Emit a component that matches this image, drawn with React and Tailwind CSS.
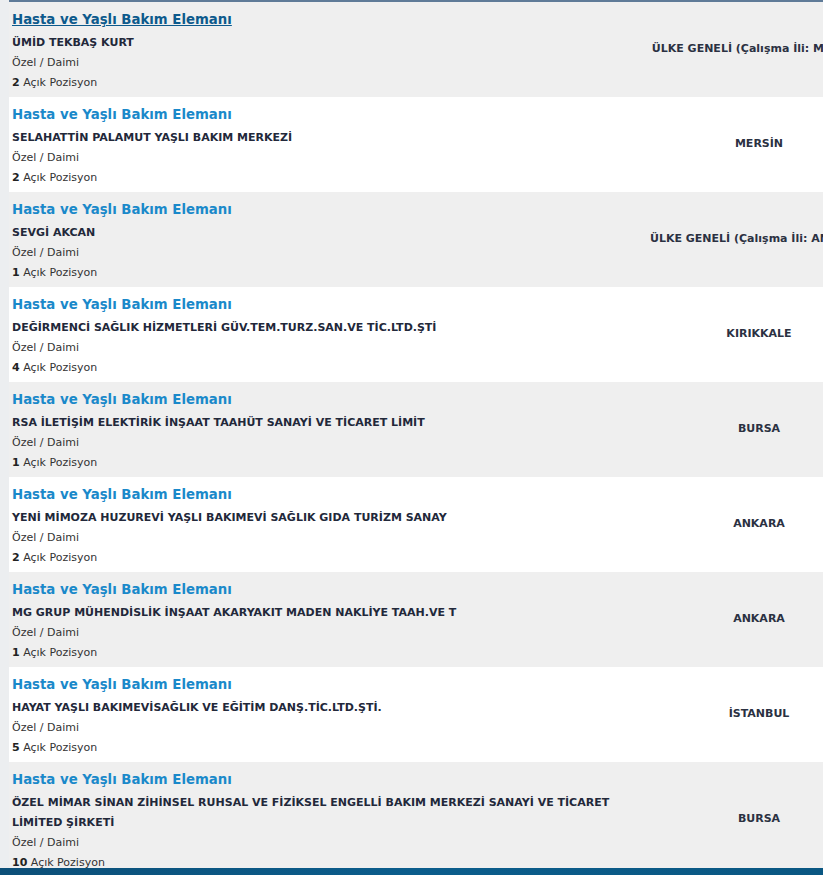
import React from 'react';

const jobs = [
  { company: 'ÜMİD TEKBAŞ KURT', count: 2, city: 'ÜLKE GENELİ (Çalışma İli: MERSİN)', hover: true },
  { company: 'SELAHATTİN PALAMUT YAŞLI BAKIM MERKEZİ', count: 2, city: 'MERSİN' },
  { company: 'SEVGİ AKCAN', count: 1, city: 'ÜLKE GENELİ (Çalışma İli: ANKARA)' },
  { company: 'DEĞİRMENCİ SAĞLIK HİZMETLERİ GÜV.TEM.TURZ.SAN.VE TİC.LTD.ŞTİ', count: 4, city: 'KIRIKKALE' },
  { company: 'RSA İLETİŞİM ELEKTİRİK İNŞAAT TAAHÜT SANAYİ VE TİCARET LİMİT', count: 1, city: 'BURSA' },
  { company: 'YENİ MİMOZA HUZUREVİ YAŞLI BAKIMEVİ SAĞLIK GIDA TURİZM SANAY', count: 2, city: 'ANKARA' },
  { company: 'MG GRUP MÜHENDİSLİK İNŞAAT AKARYAKIT MADEN NAKLİYE TAAH.VE T', count: 1, city: 'ANKARA' },
  { company: 'HAYAT YAŞLI BAKIMEVİSAĞLIK VE EĞİTİM DANŞ.TİC.LTD.ŞTİ.', count: 5, city: 'İSTANBUL' },
  { company: 'ÖZEL MİMAR SİNAN ZİHİNSEL RUHSAL VE FİZİKSEL ENGELLİ BAKIM MERKEZİ SANAYİ VE TİCARET LİMİTED ŞİRKETİ', count: 10, city: 'BURSA' },
];

const JobRow = ({ job, gray }) => (
  <div className={`grid grid-cols-[612px_276px] ${gray ? 'bg-[#efefef]' : 'bg-white'}`}>
    <div className="pl-[3px] pt-[8px] pb-[4px]">
      <a
        href="#"
        className={`block text-[13.3px] font-bold leading-[20px] mb-[3px] ${
          job.hover ? 'text-[#0d5a8c] underline' : 'text-[#1a89ca]'
        }`}
      >
        Hasta ve Yaşlı Bakım Elemanı
      </a>
      <p className="text-[11px] font-bold leading-[20px] text-[#22283a]">{job.company}</p>
      <p className="text-[11px] leading-[20px] text-[#333]">Özel / Daimi</p>
      <p className="text-[11px] leading-[20px] text-[#333]">
        <b className="text-[#222]">{job.count}</b> Açık Pozisyon
      </p>
    </div>
    <div className="flex items-center justify-center">
      <span className="whitespace-nowrap text-[11px] font-bold text-[#2b3142]">{job.city}</span>
    </div>
  </div>
);

const App = () => {
  return (
    <div
      className="relative h-[875px] w-[823px] overflow-hidden bg-[#eceef0]"
      style={{ fontFamily: '"DejaVu Sans", Verdana, sans-serif' }}
    >
      <div className="ml-[9px] w-[890px] border-t-2 border-[#5f7b98]">
        {jobs.map((job, i) => (
          <JobRow key={i} job={job} gray={i % 2 === 0} />
        ))}
      </div>

      {/* footer band */}
      <div className="fixed bottom-0 left-0 h-[7px] w-[823px] bg-gradient-to-r from-[#0c4f78] via-[#0b5d8c] to-[#0a5782]" />
    </div>
  );
};

export default App;
